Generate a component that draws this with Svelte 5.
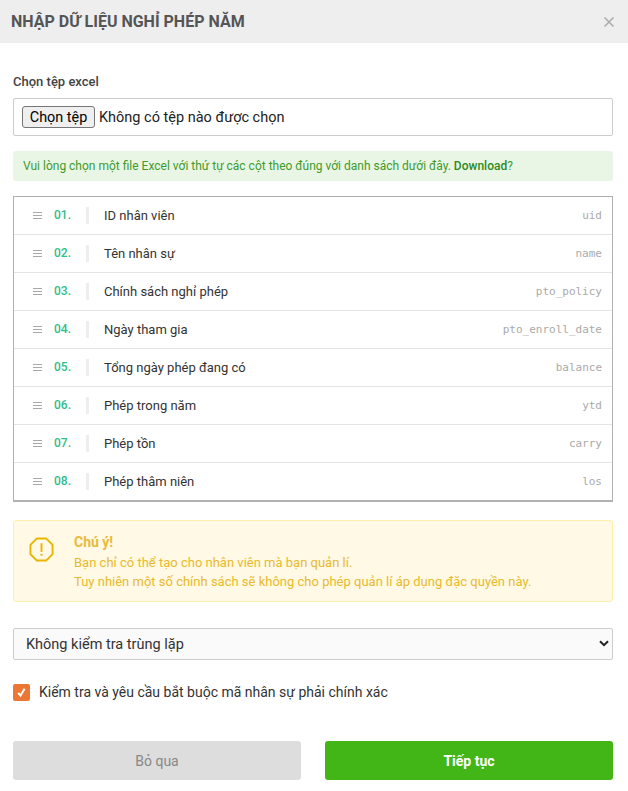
<script>
  const rows = [
    ['01.', 'ID nhân viên', 'uid'],
    ['02.', 'Tên nhân sự', 'name'],
    ['03.', 'Chính sách nghỉ phép', 'pto_policy'],
    ['04.', 'Ngày tham gia', 'pto_enroll_date'],
    ['05.', 'Tổng ngày phép đang có', 'balance'],
    ['06.', 'Phép trong năm', 'ytd'],
    ['07.', 'Phép tồn', 'carry'],
    ['08.', 'Phép thâm niên', 'los']
  ];
</script>

<div class="modal">
  <header class="head">
    <h1>NHẬP DỮ LIỆU NGHỈ PHÉP NĂM</h1>
    <svg class="close" width="10" height="10" viewBox="0 0 10 10"><path d="M.5.5l9 9M9.5.5l-9 9" stroke="#aaa" stroke-width="1.5" fill="none"/></svg>
  </header>
  <main class="body">
    <div class="label">Chọn tệp excel</div>
    <div class="file">
      <button class="filebtn" type="button">Chọn tệp</button>
      <span>Không có tệp nào được chọn</span>
    </div>
    <div class="info">Vui lòng chọn một file Excel với thứ tự các cột theo đúng với danh sách dưới đây. <b>Download</b>?</div>
    <div class="list">
      {#each rows as r}
        <div class="row">
          <span class="grip"><i></i><i></i><i></i></span>
          <span class="num">{r[0]}</span>
          <span class="sep"></span>
          <span class="name">{r[1]}</span>
          <span class="code">{r[2]}</span>
        </div>
      {/each}
    </div>
    <div class="warn">
      <svg width="25" height="25" viewBox="0 0 26 26" fill="none">
        <path d="M8.2 1.5h9.6l6.7 6.7v9.6l-6.7 6.7H8.2l-6.7-6.7V8.2z" stroke="#e8b500" stroke-width="2"/>
        <path d="M13 6.5v9" stroke="#e8b500" stroke-width="2"/>
        <path d="M13 17.5v2" stroke="#e8b500" stroke-width="2"/>
      </svg>
      <div class="warntext">
        <div class="warnhead">Chú ý!</div>
        <div>Bạn chỉ có thể tạo cho nhân viên mà bạn quản lí.</div>
        <div>Tuy nhiên một số chính sách sẽ không cho phép quản lí áp dụng đặc quyền này.</div>
      </div>
    </div>
    <div class="selwrap">
      <select class="sel">
        <option>Không kiểm tra trùng lặp</option>
      </select>
      <svg class="chev" width="10" height="7" viewBox="0 0 10 7" fill="none"><path d="M1 1.2l4 4 4-4" stroke="#222" stroke-width="2"/></svg>
    </div>
    <div class="check">
      <span class="box"><svg width="11" height="11" viewBox="0 0 11 11" fill="none"><path d="M2.2 6l2.3 2.6L8.6 1.8" stroke="#fff" stroke-width="2"/></svg></span>
      <span>Kiểm tra và yêu cầu bắt buộc mã nhân sự phải chính xác</span>
    </div>
    <div class="actions">
      <button class="btn skip" type="button">Bỏ qua</button>
      <button class="btn next" type="button">Tiếp tục</button>
    </div>
  </main>
</div>

<style>
  :global(body) { margin: 0; background: #fff; font-family: Roboto, "Noto Sans", sans-serif; }
  .modal { width: 628px; height: 791px; overflow: hidden; color: #333; }
  .head { height: 43px; background: #eee; display: flex; align-items: center; justify-content: space-between; padding: 0 14px 0 11px; box-sizing: border-box; }
  h1 { margin: 0; font-size: 16px; font-weight: 700; color: #555; }
  .body { padding: 31px 15px 0 13px; }
  .label { font-size: 13px; font-weight: 500; line-height: 16px; color: #444; }
  .file { margin-top: 8px; height: 38px; box-sizing: border-box; border: 1px solid #ccc; border-radius: 2px; display: flex; align-items: center; padding-left: 8px; font-size: 14.5px; color: #222; gap: 4px; }
  .filebtn { font: inherit; font-size: 14.4px; height: 22px; width: 73px; padding: 0; background: #efefef; border: 1px solid #767676; border-radius: 3px; color: #000; }
  .info { margin-top: 15px; height: 30px; line-height: 30px; background: #e9f6e6; border-radius: 3px; padding-left: 10px; font-size: 12px; color: #3f9a2c; white-space: nowrap; }
  .info b { font-weight: 500; color: #2e8a1e; }
  .list { margin-top: 15px; border: 1px solid #b0b0b0; border-bottom-width: 2px; box-sizing: border-box; height: 306px; }
  .row { height: 38px; box-sizing: border-box; border-bottom: 1px solid #e4e4e4; display: flex; align-items: center; font-size: 13px; padding: 0 10px 0 18px; }
  .row:last-child { border-bottom-color: transparent; }
  .grip { display: flex; flex-direction: column; gap: 2px; width: 9px; margin-left: 1px; }
  .grip i { display: block; height: 1px; background: #a9a9a9; }
  .num { margin-left: 12px; width: 32px; font-weight: 500; font-size: 12px; color: #33bd8a; margin-top: -1px; }
  .sep { width: 3px; height: 17px; background: #eee; }
  .name { margin-left: 15px; flex: 1; color: #333; }
  .code { font-family: "DejaVu Sans Mono", monospace; font-size: 11px; color: #aaa; }
  .warn { margin-top: 18px; height: 82px; box-sizing: border-box; background: #fff9e6; border: 1px solid #ffeeaa; border-radius: 3px; display: flex; padding: 16px 0 0 15px; gap: 20px; font-size: 13px; line-height: 19px; color: #e9b92c; }
  .warntext { margin-top: -5px; }
  .warnhead { font-size: 14px; font-weight: 700; line-height: 21px; color: #e8bb3a; }
  .selwrap { position: relative; margin-top: 26px; width: 600px; height: 32px; }
  .sel { display: block; appearance: none; width: 100%; height: 32px; box-sizing: border-box; border: 1px solid #ccc; border-radius: 2px; background: #fafafa; padding: 0 12px; font: 14.5px Roboto, sans-serif; color: #333; }
  .chev { position: absolute; right: 4px; top: 12px; pointer-events: none; }
  .check { margin-top: 23px; display: flex; align-items: center; gap: 9px; font-size: 14px; color: #333; line-height: 18px; }
  .box { width: 17px; height: 17px; background: #ec7634; border-radius: 2px; display: flex; align-items: center; justify-content: center; }
  .actions { margin-top: 40px; display: flex; gap: 24px; }
  .btn { flex: 1; height: 39px; border: 0; border-radius: 3px; font: 14px Roboto, sans-serif; padding: 0; }
  .skip { background: #ddd; color: #888; }
  .next { background: #42b616; color: #fff; font-weight: 700; }
</style>
